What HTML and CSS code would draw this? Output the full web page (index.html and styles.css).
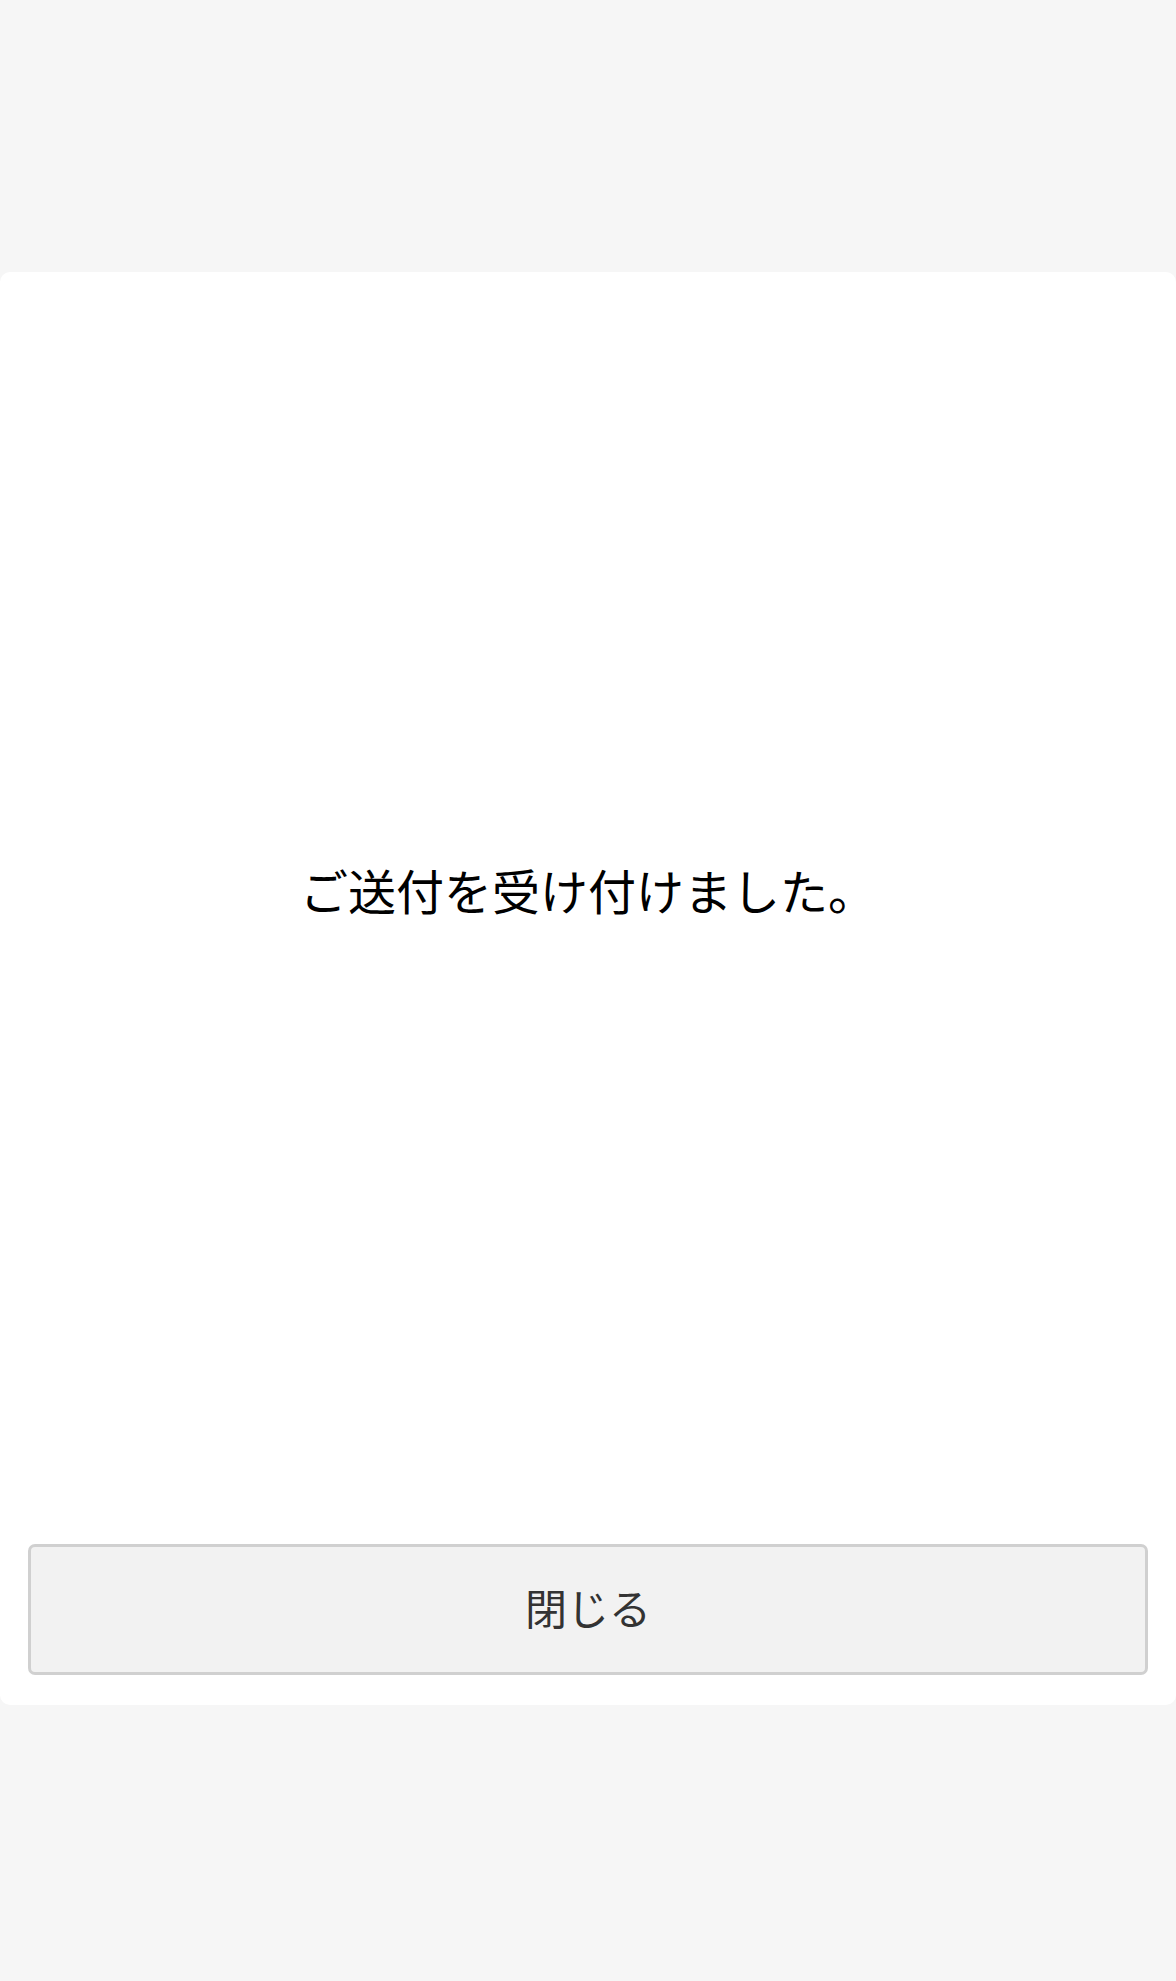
FILE: index.html
```html
<!DOCTYPE html>
<html lang="ja">
<head>
  <meta charset="UTF-8">
  <meta name="viewport" content="width=device-width, initial-scale=1.0">
  <title>送付完了</title>
  <link rel="stylesheet" href="styles.css">
</head>
<body>
  <div class="sheet">
    <div class="message">
      <p>ご送付を受け付けました。</p>
    </div>
    <button type="button" class="close-btn">閉じる</button>
  </div>
</body>
</html>
```

FILE: styles.css
```css
html, body {
  margin: 0;
  padding: 0;
}

body {
  background: #f6f6f6;
  font-family: "Noto Sans CJK JP", "Noto Sans", sans-serif;
  min-height: 1981px;
}

.sheet {
  margin-top: 272px;
  height: 1433px;
  box-sizing: border-box;
  background: #fff;
  border-radius: 10px;
  padding: 0 28px 30px;
  display: flex;
  flex-direction: column;
}

.message {
  flex: 1;
  display: flex;
  align-items: center;
  justify-content: center;
}

.message p {
  margin: 0;
  font-size: 48px;
  color: #000;
  padding-bottom: 4px;
}

.close-btn {
  margin-top: 34px;
  height: 131px;
  width: 100%;
  padding: 0 0 7px;
  background: #f2f2f2;
  border: 3px solid #d0d0d0;
  border-radius: 7px;
  color: #333;
  font-family: inherit;
  font-size: 42px;
  cursor: pointer;
}
```
